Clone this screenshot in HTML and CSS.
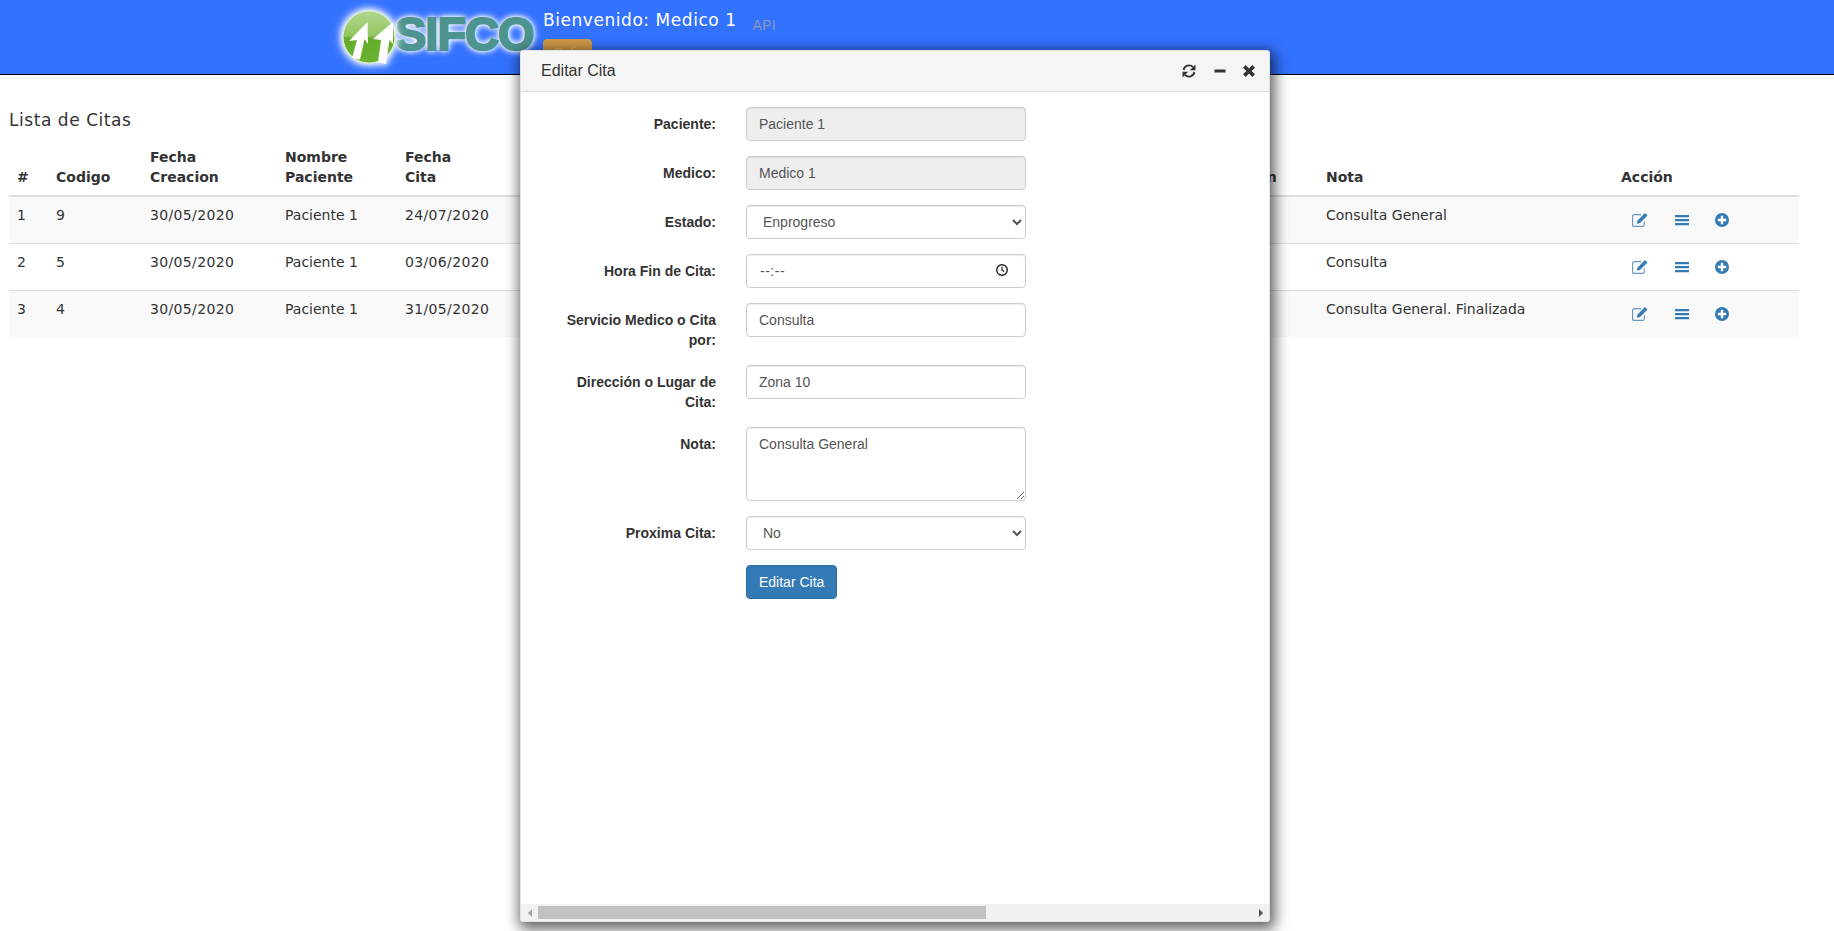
FILE: index.html
```html
<!DOCTYPE html>
<html lang="es">
<head>
<meta charset="utf-8">
<title>SIFCO - Lista de Citas</title>
<link rel="stylesheet" href="styles.css">
</head>
<body>
<header class="topbar">
  <div class="logo">
    <svg class="logo-globe" viewBox="0 0 70 70" width="70" height="70" aria-hidden="true">
      <defs>
        <linearGradient id="globeFill" x1="0" y1="0" x2="0" y2="1">
          <stop offset="0" stop-color="#b0d68e"/>
          <stop offset="0.48" stop-color="#94c662"/>
          <stop offset="0.52" stop-color="#62ac28"/>
          <stop offset="1" stop-color="#6cb234"/>
        </linearGradient>
      </defs>
      <circle cx="28" cy="35" r="26" fill="url(#globeFill)" stroke="#dfeecb" stroke-width="1.200"/>
      <path d="M26.500 20L8 39l8-1-5 18 8 1.500L23.500 37l3.500 5z" fill="#fff"/>
      <path d="M52 20L32 37l8 1-3 22 8 2 3.500-24 3.500 4z" fill="#fff"/>
    </svg>
    <span class="logo-text">SIFCO</span>
  </div>
  <div class="welcome">
    <div class="welcome-line">
      <span class="welcome-name">Bienvenido: Medico 1</span>
      <a class="api-link">API</a>
    </div>
    <button class="exit-btn" type="button">Salir</button>
  </div>
</header>

<main class="content">
  <h4 class="page-title">Lista de Citas</h4>
  <table class="citas">
    <colgroup>
      <col class="c-num"><col class="c-cod"><col class="c-fec"><col class="c-nom"><col class="c-cit">
      <col class="c-hid1"><col class="c-hid2"><col class="c-dir"><col class="c-nota"><col class="c-acc">
    </colgroup>
    <thead>
      <tr>
        <th>#</th><th>Codigo</th><th>Fecha Creacion</th><th>Nombre Paciente</th><th>Fecha<br>Cita</th>
        <th>Hora</th><th>Estado</th><th>Dirección</th><th>Nota</th><th>Acción</th>
      </tr>
    </thead>
    <tbody>
      <tr>
        <td>1</td><td>9</td><td class="date">30/05/2020</td><td>Paciente 1</td><td class="date">24/07/2020</td>
        <td>08:00</td><td>Enprogreso</td><td>Zona 10</td><td>Consulta General</td>
        <td class="acc">
          <div class="actions">
            <svg class="ic" viewBox="0.5 0.5 15 15"><path d="M12 9.500v3c0 .8-.7 1.500-1.500 1.500h-8C1.700 14 1 13.300 1 12.500v-8C1 3.700 1.700 3 2.500 3H9" fill="none" stroke="#6d94c6" stroke-width="1.100"/><path d="M5 11.500l.7-3 7-7 2.300 2.300-7 7z" fill="#337ab7"/></svg>
            <svg class="ic" viewBox="0 0 16 16"><path d="M1 3h14v2.200H1zM1 7h14v2.200H1zM1 11h14v2.200H1z" fill="#337ab7"/></svg>
            <svg class="ic" viewBox="0 0 16 16"><circle cx="8" cy="8" r="7" fill="#337ab7"/><path d="M3.800 6.800h3v-3h2.400v3h3v2.400h-3v3H6.800v-3h-3z" fill="#fff"/></svg>
          </div>
        </td>
      </tr>
      <tr>
        <td>2</td><td>5</td><td class="date">30/05/2020</td><td>Paciente 1</td><td class="date">03/06/2020</td>
        <td>08:00</td><td>Finalizada</td><td>Zona 10</td><td>Consulta</td>
        <td class="acc">
          <div class="actions">
            <svg class="ic" viewBox="0.5 0.5 15 15"><path d="M12 9.500v3c0 .8-.7 1.500-1.500 1.500h-8C1.700 14 1 13.300 1 12.500v-8C1 3.700 1.700 3 2.500 3H9" fill="none" stroke="#6d94c6" stroke-width="1.100"/><path d="M5 11.500l.7-3 7-7 2.300 2.300-7 7z" fill="#337ab7"/></svg>
            <svg class="ic" viewBox="0 0 16 16"><path d="M1 3h14v2.200H1zM1 7h14v2.200H1zM1 11h14v2.200H1z" fill="#337ab7"/></svg>
            <svg class="ic" viewBox="0 0 16 16"><circle cx="8" cy="8" r="7" fill="#337ab7"/><path d="M3.800 6.800h3v-3h2.400v3h3v2.400h-3v3H6.800v-3h-3z" fill="#fff"/></svg>
          </div>
        </td>
      </tr>
      <tr>
        <td>3</td><td>4</td><td class="date">30/05/2020</td><td>Paciente 1</td><td class="date">31/05/2020</td>
        <td>08:00</td><td>Finalizada</td><td>Zona 10</td><td>Consulta General. Finalizada</td>
        <td class="acc">
          <div class="actions">
            <svg class="ic" viewBox="0.5 0.5 15 15"><path d="M12 9.500v3c0 .8-.7 1.500-1.500 1.500h-8C1.700 14 1 13.300 1 12.500v-8C1 3.700 1.700 3 2.500 3H9" fill="none" stroke="#6d94c6" stroke-width="1.100"/><path d="M5 11.500l.7-3 7-7 2.300 2.300-7 7z" fill="#337ab7"/></svg>
            <svg class="ic" viewBox="0 0 16 16"><path d="M1 3h14v2.200H1zM1 7h14v2.200H1zM1 11h14v2.200H1z" fill="#337ab7"/></svg>
            <svg class="ic" viewBox="0 0 16 16"><circle cx="8" cy="8" r="7" fill="#337ab7"/><path d="M3.800 6.800h3v-3h2.400v3h3v2.400h-3v3H6.800v-3h-3z" fill="#fff"/></svg>
          </div>
        </td>
      </tr>
    </tbody>
  </table>
</main>

<section class="panel">
  <div class="panel-head">
    <span class="panel-title">Editar Cita</span>
    <div class="panel-tools">
      <svg class="tool tool-refresh" viewBox="0 0 16 16"><path d="M2.600 7A5.500 5.500 0 0 1 12 4.200" fill="none" stroke="#333" stroke-width="1.800"/><path d="M14.500 1.500v5.700H8.800z" fill="#333"/><path d="M13.400 9A5.500 5.500 0 0 1 4 11.800" fill="none" stroke="#333" stroke-width="1.800"/><path d="M1.500 14.500V8.800h5.700z" fill="#333"/></svg>
      <svg class="tool" viewBox="0 0 16 16"><path d="M2.500 6.500h11v3H2.500z" fill="#333"/></svg>
      <svg class="tool" viewBox="0 0 16 16"><path d="M4.700 2l3.300 3.500L11.300 2 14 4.700 10.600 8l3.400 3.300-2.700 2.700L8 10.600 4.700 14 2 11.300 5.400 8 2 4.700z" fill="#333"/></svg>
    </div>
  </div>
  <div class="panel-body">
    <form class="form">
      <div class="row"><label class="lbl">Paciente:</label><div class="field"><input class="ctl" type="text" value="Paciente 1" disabled></div></div>
      <div class="row"><label class="lbl">Medico:</label><div class="field"><input class="ctl" type="text" value="Medico 1" disabled></div></div>
      <div class="row"><label class="lbl">Estado:</label><div class="field"><select class="ctl sel"><option>Enprogreso</option><option>Finalizada</option></select></div></div>
      <div class="row"><label class="lbl">Hora Fin de Cita:</label><div class="field">
        <div class="ctl time"><span class="time-val">--:--</span>
          <svg class="clock" viewBox="0 0 14 14"><circle cx="7" cy="7" r="5.300" fill="none" stroke="#222" stroke-width="1.400"/><path d="M7 3.800V7.200l2.300 1.300" fill="none" stroke="#222" stroke-width="1.200"/></svg>
        </div></div></div>
      <div class="row"><label class="lbl">Servicio Medico o Cita por:</label><div class="field"><input class="ctl" type="text" value="Consulta"></div></div>
      <div class="row"><label class="lbl">Dirección o Lugar de Cita:</label><div class="field"><input class="ctl" type="text" value="Zona 10"></div></div>
      <div class="row"><label class="lbl">Nota:</label><div class="field"><textarea class="ctl area" rows="3">Consulta General</textarea></div></div>
      <div class="row"><label class="lbl">Proxima Cita:</label><div class="field"><select class="ctl sel"><option>No</option><option>Si</option></select></div></div>
      <div class="row"><div></div><div class="field"><button class="submit" type="button">Editar Cita</button></div></div>
    </form>
  </div>
  <div class="hscroll">
    <span class="arrow arrow-left"></span>
    <div class="hscroll-track"><div class="hscroll-thumb"></div></div>
    <span class="arrow arrow-right"></span>
  </div>
</section>
</body>
</html>
```

FILE: styles.css
```css
* { box-sizing: border-box; }
html, body { margin: 0; padding: 0; height: 100%; }
body {
  background: #fff;
  color: #333;
  font-family: "DejaVu Sans", Verdana, sans-serif;
  font-size: 14px;
  line-height: 20px;
  overflow: hidden;
}

/* top bar */
.topbar {
  height: 75px;
  background: #3371ff;
  border-bottom: 1px solid #000;
  display: flex;
  padding-left: 341px;
  overflow: hidden;
}
.logo {
  width: 202px;
  height: 74px;
  display: flex;
  align-items: flex-start;
  padding-top: 2px;
}
.logo-globe {
  flex: none;
  filter: drop-shadow(0 0 3px #fff) drop-shadow(0 0 4px #fff);
}
.logo-text {
  margin-left: -16px;
  margin-top: 7px;
  font-family: "Liberation Sans", Arial, sans-serif;
  font-weight: 700;
  font-size: 47px;
  line-height: 50px;
  letter-spacing: -1px;
  color: #4d9390;
  -webkit-text-stroke: 2px #4d9390;
  text-shadow: 0 0 3px #fff, 0 0 5px #fff, 0 0 7px #fff, 0 0 9px #fff;
}
.welcome { padding-top: 8px; }
.welcome-line { display: flex; align-items: center; height: 23px; }
.welcome-name {
  color: #fff;
  font-size: 17px;
  letter-spacing: .55px;
}
.api-link {
  margin-left: 16px;
  margin-top: 10px;
  color: #8c99b8;
  font-family: "Liberation Sans", Arial, sans-serif;
  font-size: 14px;
  letter-spacing: .3px;
}
.exit-btn {
  display: block;
  margin-top: 8px;
  width: 49px;
  height: 34px;
  padding: 0 0 6px;
  background: #d09a48;
  border: 1px solid #d09a48;
  border-radius: 4px;
  color: #e0b577;
  font: 14px "Liberation Sans", Arial, sans-serif;
}

/* list */
.content { padding: 35px 35px 0 9px; }
.page-title {
  margin: 0 0 9px;
  font-size: 17px;
  font-weight: 400;
  line-height: 20px;
  letter-spacing: .55px;
}
.citas {
  width: 100%;
  table-layout: fixed;
  border-collapse: collapse;
}
.c-num { width: 39px; }
.c-cod { width: 94px; }
.c-fec { width: 135px; }
.c-nom { width: 120px; }
.c-cit { width: 120px; }
.c-hid1 { width: 340px; }
.c-hid2 { width: 338px; }
.c-dir { width: 123px; }
.c-nota { width: 295px; }
.c-acc { width: 186px; }
.citas th {
  padding: 8px;
  text-align: left;
  vertical-align: bottom;
  font-weight: 700;
  border-bottom: 2px solid #ddd;
}
.citas td {
  height: 47px;
  padding: 8px;
  vertical-align: top;
  border-top: 1px solid #ddd;
}
.citas td.date { letter-spacing: .35px; }
.citas tbody tr:first-child td { border-top: 0; }
.citas tbody tr:nth-child(odd) { background: #f9f9f9; }
.citas td.acc { padding: 0 8px; vertical-align: middle; }
.actions { display: flex; gap: 25px; padding-left: 11px; }
.ic { width: 16px; height: 16px; flex: none; }
.ic:nth-child(2) { margin-left: 1px; margin-right: -1px; }

/* floating panel */
.panel {
  position: absolute;
  left: 520px;
  top: 50px;
  width: 750px;
  height: 872px;
  display: flex;
  flex-direction: column;
  background: #fff;
  border: 1px solid #e2e2e2;
  border-radius: 3px;
  box-shadow: 2px 4px 14px 3px rgba(0, 0, 0, .62);
  font-family: "Liberation Sans", Arial, sans-serif;
}
.panel-head {
  flex: none;
  height: 41px;
  display: flex;
  align-items: center;
  justify-content: space-between;
  padding: 0 12px 0 20px;
  background: #f5f5f5;
  border-bottom: 1px solid #ddd;
}
.panel-title { font-size: 16px; color: #333; }
.panel-tools { display: flex; gap: 13.500px; }
.tool { width: 16px; height: 16px; }
.tool-refresh { margin-right: 1px; }
.panel-body { flex: 1; min-height: 0; padding: 15px 0 0 24px; }
.row {
  display: grid;
  grid-template-columns: 186px 310px;
  margin-bottom: 15px;
}
.lbl {
  padding: 7px 15px 0;
  text-align: right;
  font-weight: 700;
  font-size: 14px;
  line-height: 20px;
}
.field { padding: 0 15px; }
.ctl {
  display: block;
  width: 100%;
  height: 34px;
  padding: 6px 12px;
  font: 14px/20px "Liberation Sans", Arial, sans-serif;
  color: #555;
  background: #fff;
  border: 1px solid #ccc;
  border-radius: 4px;
  box-shadow: inset 0 1px 1px rgba(0, 0, 0, .075);
}
.ctl:disabled { background: #eee; opacity: 1; color: #555; }
.sel { padding-left: 12px; }
.time { display: flex; align-items: center; justify-content: space-between; padding: 6px 16px 6px 13px; }
.time-val { letter-spacing: .5px; }
.clock { width: 14px; height: 14px; margin-top: -2px; }
.area { height: 74px; resize: vertical; }
.submit {
  height: 34px;
  padding: 6px 12px;
  background: #337ab7;
  border: 1px solid #2e6da4;
  border-radius: 4px;
  color: #fff;
  font: 14px/20px "Liberation Sans", Arial, sans-serif;
}

/* horizontal scrollbar */
.hscroll {
  flex: none;
  height: 17px;
  display: flex;
  align-items: center;
  background: #f1f1f1;
}
.arrow { flex: none; width: 17px; display: flex; justify-content: center; }
.arrow::before {
  content: "";
  border-style: solid;
  border-color: transparent;
  border-width: 4px 4px;
}
.arrow-left::before { border-right-color: #a3a3a3; border-left-width: 0; }
.arrow-right::before { border-left-color: #505050; border-right-width: 0; }
.hscroll-track { flex: 1; height: 13px; }
.hscroll-thumb { width: 448px; height: 13px; background: #c1c1c1; }
```
